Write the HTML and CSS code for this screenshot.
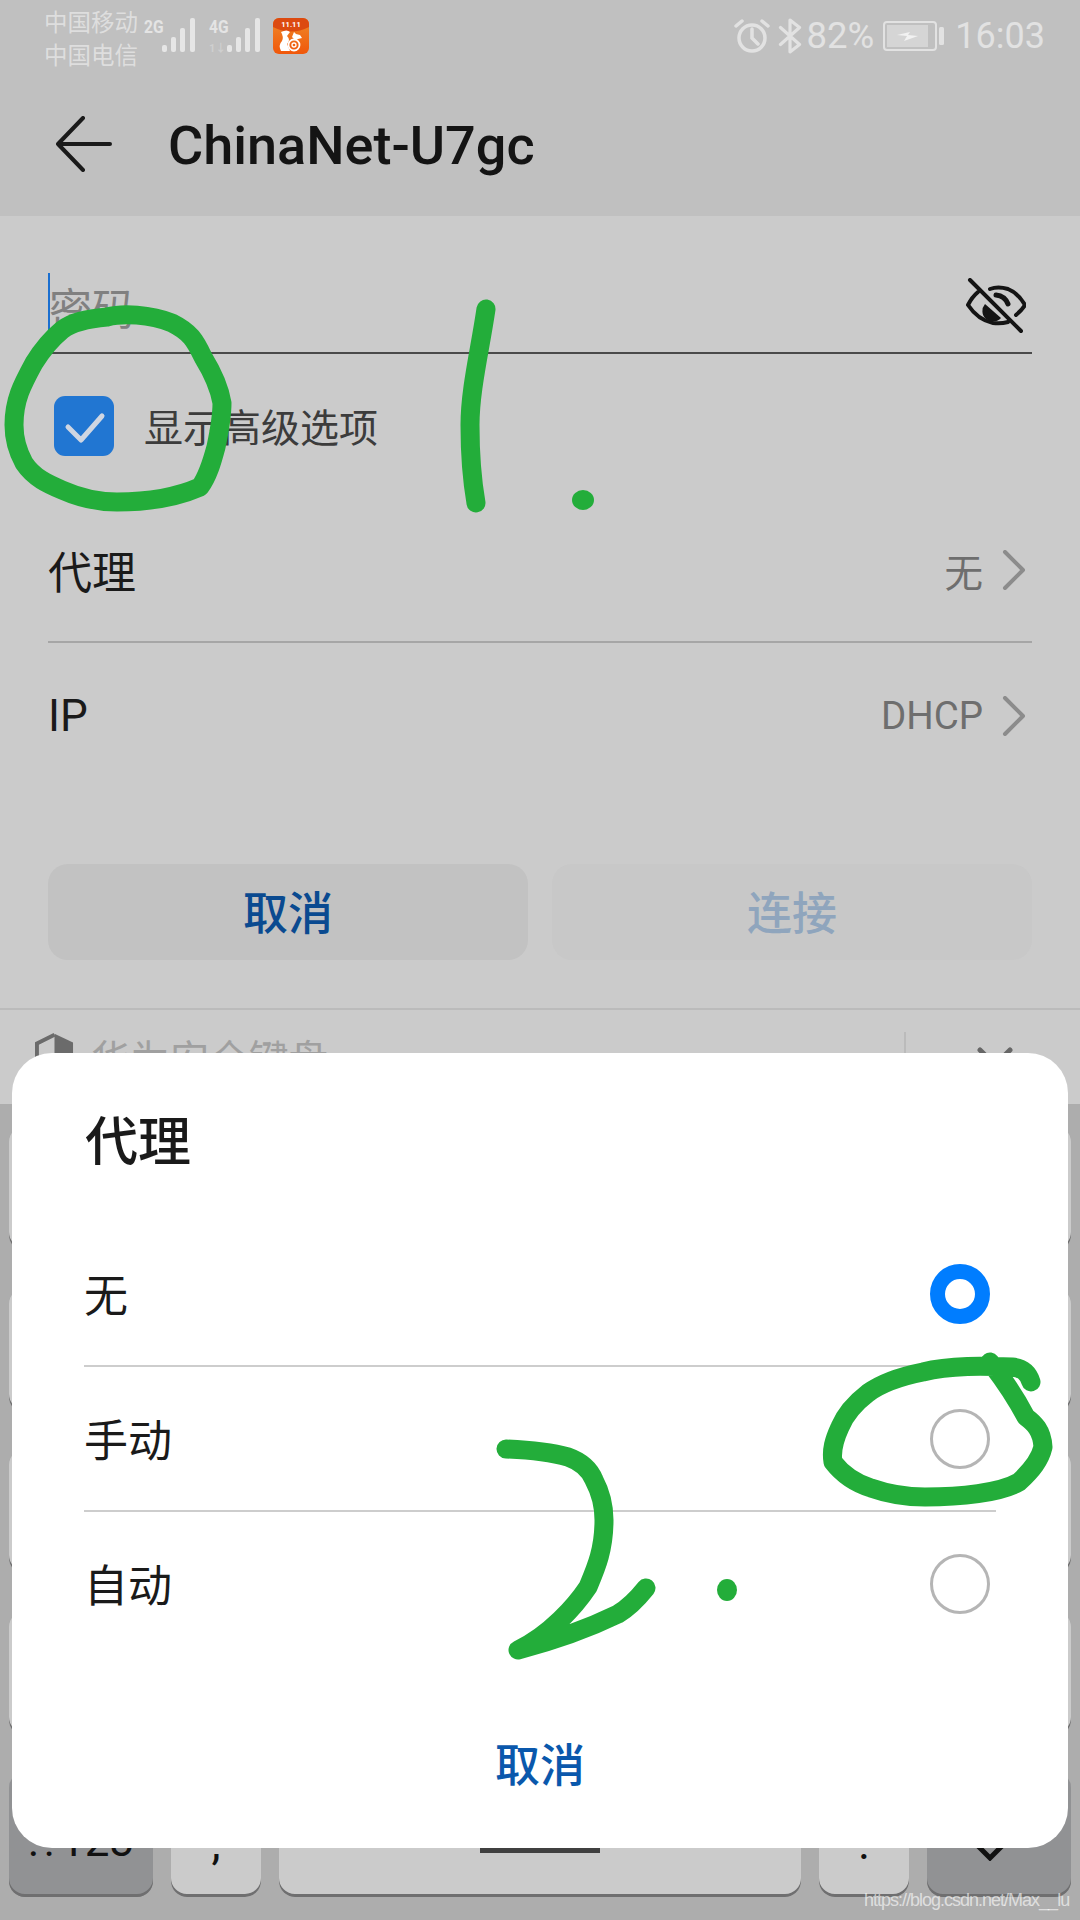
FILE: index.html
```html
<!DOCTYPE html>
<html lang="zh">
<head>
<meta charset="utf-8">
<title>ChinaNet-U7gc</title>
<link rel="stylesheet" href="styles.css">
</head>
<body>
<div class="screen">
  <header class="appbar">
    <div class="status">
      <div class="carriers"><span>中国移动</span><span>中国电信</span></div>
      <div class="net"><div class="net-stack"><span class="net-label">2G</span></div>
        <svg class="bars" viewBox="0 0 36 36"><rect x="0" y="27" width="5" height="7" rx="2"/><rect x="9" y="19" width="5" height="15" rx="2"/><rect x="18" y="10" width="5" height="24" rx="2"/><rect x="28" y="0" width="5" height="34" rx="2"/></svg>
      </div>
      <div class="net net-second"><div class="net-stack"><span class="net-label">4G</span><span class="net-sub">1↓</span></div>
        <svg class="bars" viewBox="0 0 36 36"><rect x="0" y="27" width="5" height="7" rx="2"/><rect x="9" y="19" width="5" height="15" rx="2"/><rect x="18" y="10" width="5" height="24" rx="2"/><rect x="28" y="0" width="5" height="34" rx="2"/></svg>
      </div>
      <svg class="app-icon" viewBox="0 0 36 36">
        <defs><linearGradient id="uc" x1="0" y1="0" x2="0" y2="1"><stop offset="0" stop-color="#ef8a2a"/><stop offset="1" stop-color="#f0570a"/></linearGradient></defs>
        <rect width="36" height="36" rx="6" fill="url(#uc)"/>
        <path d="M0 6a6 6 0 0 1 6-6h24a6 6 0 0 1 6 6v3q-18 9-36 0z" fill="#dc4a10"/>
        <text x="18" y="8.500" text-anchor="middle" class="app-icon-text">11.11</text>
        <path d="M8 14q6-3 9 0l-3 4q4 4 0 8l3 7H8q-3-6 1-10 2-4-1-9z" fill="#fff"/>
        <circle cx="21" cy="27" r="5.500" fill="none" stroke="#fff" stroke-width="1.800"/>
        <circle cx="21" cy="27" r="2" fill="none" stroke="#fff" stroke-width="1.300"/>
        <path d="M19 19l2-5 2 2 4 1 2 3-4 1-2 1-2-1z" fill="#fff"/>
      </svg>
      <div class="status-right">
        <svg class="alarm" viewBox="0 0 36 36" fill="none" stroke="#e2e2e2" stroke-width="3.500"><circle cx="18" cy="20" r="13"/><path d="M18 11v9l6 6M2 8l6-5M34 8l-6-5" stroke-linecap="round"/></svg>
        <svg class="bt" viewBox="0 0 22 34" fill="none" stroke="#e2e2e2" stroke-width="3" stroke-linejoin="round" stroke-linecap="round"><path d="M2 9l18 16-9 7V2l9 7L2 25"/></svg>
        <span class="pct">82%</span>
        <svg class="battery" viewBox="0 0 62 30"><rect x="1" y="1" width="52" height="28" rx="3" fill="none" stroke="#e2e2e2" stroke-width="2"/><rect x="4" y="4" width="41" height="22" fill="#d5d5d5"/><path d="M14 14l13-3-2 3 10 1-14 5 3-5z" fill="#f2f2f2"/><rect x="56" y="6" width="5" height="18" rx="1.500" fill="#e2e2e2"/></svg>
        <span class="clock">16:03</span>
      </div>
    </div>
    <div class="toolbar">
      <svg class="back" viewBox="0 0 56 56" fill="none" stroke="#1a1a1a" stroke-width="4" stroke-linecap="round" stroke-linejoin="round"><path d="M27 2L2 28l25 26M2 28h52"/></svg>
      <h1 class="title">ChinaNet-U7gc</h1>
    </div>
  </header>

  <main class="form">
    <div class="password">
      <span class="caret"></span>
      <span class="placeholder">密码</span>
      <svg class="eye" viewBox="966 278 60 56" fill="none" stroke="#141414" stroke-width="4" stroke-linecap="round">
        <path d="M978 292q-6 5-10 13 10 15 25 18 8 1 15-1"/>
        <path d="M990 289q8-3 18 0 10 4 17 16-3 5-9 10"/>
        <path d="M985 304a10.500 10.500 0 0 0 16 14z" fill="#141414" stroke="none"/>
        <path d="M996 295q9 1 12 9" stroke-width="5"/>
        <path d="M970 280l51 51"/>
      </svg>
    </div>
    <label class="advanced">
      <span class="checkbox"><svg viewBox="0 0 60 60" fill="none" stroke="#cfd6e2" stroke-width="5" stroke-linecap="round" stroke-linejoin="round"><path d="M14 31l13 13 21-24"/></svg></span>
      <span class="advanced-text">显示高级选项</span>
    </label>
    <div class="row row-line">
      <span class="row-label">代理</span>
      <span class="row-value">无</span>
      <svg class="chev" viewBox="0 0 24 40" fill="none" stroke="#8c8c8c" stroke-width="4" stroke-linecap="round" stroke-linejoin="round"><path d="M3 2l18 18L3 38"/></svg>
    </div>
    <div class="row">
      <span class="row-label">IP</span>
      <span class="row-value">DHCP</span>
      <svg class="chev" viewBox="0 0 24 40" fill="none" stroke="#8c8c8c" stroke-width="4" stroke-linecap="round" stroke-linejoin="round"><path d="M3 2l18 18L3 38"/></svg>
    </div>
    <div class="actions">
      <button class="btn btn-cancel">取消</button>
      <button class="btn btn-connect">连接</button>
    </div>
  </main>

  <section class="kb-bar">
    <svg class="shield" viewBox="0 0 40 60"><path d="M20 2L2 11v45" fill="none" stroke="#6b6b6b" stroke-width="4"/><path d="M20 1l19 9v48H20z" fill="#6b6b6b"/></svg>
    <span class="kb-name">华为安全键盘</span>
    <span class="kb-sep"></span>
    <svg class="kb-close" viewBox="0 0 36 24" fill="none" stroke="#666" stroke-width="5" stroke-linecap="round"><path d="M3 3l15 15L33 3"/></svg>
  </section>

  <section class="keyboard">
    <div class="kb-row"><i class="key"></i><i class="key"></i><i class="key"></i><i class="key"></i><i class="key"></i><i class="key"></i><i class="key"></i><i class="key"></i><i class="key"></i><i class="key"></i></div>
    <div class="kb-row"><i class="key"></i><i class="key"></i><i class="key"></i><i class="key"></i><i class="key"></i><i class="key"></i><i class="key"></i><i class="key"></i><i class="key"></i><i class="key"></i></div>
    <div class="kb-row"><i class="key"></i><i class="key"></i><i class="key"></i><i class="key"></i><i class="key"></i><i class="key"></i><i class="key"></i><i class="key"></i><i class="key"></i><i class="key"></i></div>
    <div class="kb-row"><i class="key"></i><i class="key"></i><i class="key"></i><i class="key"></i><i class="key"></i><i class="key"></i><i class="key"></i><i class="key"></i><i class="key"></i><i class="key"></i></div>
    <div class="kb-bottom">
      <div class="key key-fn key-sym">.?123</div>
      <div class="key key-punct">,</div>
      <div class="key key-space"><span class="space-mark"></span></div>
      <div class="key key-punct">.</div>
      <div class="key key-fn"><svg class="enter" viewBox="0 0 30 16" fill="none" stroke="#111" stroke-width="5"><path d="M3 1l12 12L27 1"/></svg></div>
    </div>
  </section>

  <div class="dialog">
    <h2 class="dialog-title">代理</h2>
    <ul class="options">
      <li class="option"><span class="option-text">无</span><span class="radio radio-on"></span></li>
      <li class="option"><span class="option-text">手动</span><span class="radio"></span></li>
      <li class="option"><span class="option-text">自动</span><span class="radio"></span></li>
    </ul>
    <div class="dialog-cancel">取消</div>
  </div>

  <svg class="ink" viewBox="0 0 1080 1920" fill="none" stroke="#23ad3a" stroke-width="19" stroke-linecap="round" stroke-linejoin="round">
    <path d="M203 357C195 340 190 332 172 323C150 314 122 313 107 317C86 319 72 322 62 330C50 340 42 350 34 363C22 385 14 400 14 425C14 440 18 452 24 463C34 478 48 484 62 490C80 498 100 502 117 502C145 502 175 498 200 487C208 476 212 462 216 447C220 428 222 415 222 403C219 385 211 370 203 357"/>
    <path d="M486 309C480 350 470 390 470 425C470 455 472 480 476 503"/>
    <ellipse cx="583" cy="500" rx="11" ry="10" fill="#23ad3a" stroke="none"/>
    <path d="M1031 1382C1028 1372 1022 1368 1012 1367C985 1366 950 1365 923 1372C903 1376 883 1382 868 1393C855 1403 845 1415 840 1427C834 1440 831 1450 833 1462C843 1475 855 1483 871 1488C888 1494 905 1497 925 1497C960 1497 1000 1493 1019 1482C1032 1470 1040 1460 1043 1447C1042 1430 1034 1423 1026 1417C1012 1390 1000 1375 990 1362"/>
    <path d="M506 1449C530 1450 550 1452 568 1457C582 1462 590 1470 594 1480C602 1495 604 1510 604 1520C604 1550 596 1568 588 1587C576 1605 550 1635 518 1650C545 1643 585 1630 618 1614C628 1608 638 1598 646 1588"/>
    <ellipse cx="727" cy="1590" rx="10" ry="11" fill="#23ad3a" stroke="none"/>
  </svg>

  <div class="watermark">https://blog.csdn.net/Max__lu</div>
</div>
</body>
</html>
```

FILE: styles.css
```css
* { box-sizing: border-box; }
html, body { margin: 0; padding: 0; }
body { width: 1080px; height: 1920px; overflow: hidden; font-family: Roboto, "Noto Sans CJK SC", sans-serif; }
.screen { position: relative; width: 1080px; height: 1920px; overflow: hidden; background: #adadad; display: flex; flex-direction: column; }

/* app bar */
.appbar { height: 216px; background: #c0c0c0; }
.status { height: 72px; display: flex; align-items: flex-start; padding-left: 44px; color: #e2e2e2; }
.carriers { display: flex; flex-direction: column; width: 100px; font-size: 23.500px; line-height: 33px; padding-top: 5px; color: #dedede; font-family: "Noto Sans CJK SC", sans-serif; }
.net { display: flex; width: 55px; padding-top: 18px; }
.net-second { width: 63px; margin-left: 10px; }
.net-stack { display: flex; flex-direction: column; width: 18px; }
.net-label { font-size: 19px; line-height: 18px; font-weight: 700; color: #e4e4e4; transform: scaleX(.82); transform-origin: left top; white-space: nowrap; }
.net-sub { font-size: 11px; line-height: 12px; margin-top: 7px; font-weight: 700; color: #cfcfcf; white-space: nowrap; }
.bars { width: 36px; height: 36px; fill: #e6e6e6; }
.app-icon { width: 36px; height: 36px; margin-top: 18px; margin-left: 1px; }
.app-icon-text { font-size: 7.500px; font-weight: 700; fill: #fff; font-family: Roboto, sans-serif; }
.status-right { margin-left: auto; display: flex; align-items: center; height: 72px; padding-right: 35px; }
.alarm { width: 36px; height: 36px; }
.bt { width: 24px; height: 36px; margin-left: 8px; }
.pct { font-size: 36.500px; line-height: 72px; margin-left: 5px; }
.battery { width: 62px; height: 30px; margin-left: 9px; }
.clock { font-size: 36px; line-height: 72px; margin-left: 10px; }

.toolbar { height: 144px; display: flex; align-items: center; padding-left: 56px; }
.back { width: 56px; height: 56px; }
.title { margin: 3px 0 0 56px; font-size: 54px; line-height: 64px; font-weight: 500; color: #141414; }

/* form */
.form { height: 792px; background: #cbcbcb; padding: 57px 48px 0; }
.password { position: relative; height: 81px; border-bottom: 2px solid #4a4a4a; display: flex; justify-content: space-between; }
.caret { position: absolute; left: 0; top: 0; width: 2px; height: 60px; background: #1a6fd0; }
.placeholder { font-size: 43px; line-height: 60px; padding: 3px 0 0 1px; color: #808080; font-family: "Noto Sans CJK SC", sans-serif; }
.eye { width: 60px; height: 56px; margin: 5px 6px 0 0; }
.advanced { display: flex; align-items: center; gap: 30px; padding-left: 6px; margin-top: 42px; height: 60px; }
.checkbox { width: 60px; height: 60px; border-radius: 11px; background: #2176d2; }
.checkbox svg { display: block; width: 60px; height: 60px; }
.advanced-text { font-size: 39px; line-height: 56px; margin-top: -2px; color: #3c3c3c; font-family: "Noto Sans CJK SC", sans-serif; }
.row { height: 145px; display: flex; align-items: center; }
.row-line { margin-top: 42px; border-bottom: 2px solid #a6a6a6; }
.row-label { font-size: 44px; color: #1a1a1a; margin-right: auto; font-family: Roboto, "Noto Sans CJK SC", sans-serif; }
.row-value { font-size: 38.500px; color: #6e6e6e; font-family: Roboto, "Noto Sans CJK SC", sans-serif; }
.chev { width: 24px; height: 40px; margin: 0 6px 0 19px; }
.actions { display: grid; grid-template-columns: 480px 480px; gap: 24px; margin-top: 76px; }
.btn { height: 96px; border: 0; border-radius: 20px; font-size: 45px; font-weight: 500; padding: 0 0 4px; font-family: "Noto Sans CJK SC", sans-serif; }
.btn-cancel { background: #c2c2c2; color: #0a4a90; }
.btn-connect { background: #c8c8c8; color: #8fa5bd; }

/* keyboard */
.kb-bar { height: 96px; background: #cbcbcb; border-top: 2px solid #bbb; display: flex; align-items: flex-start; padding-left: 35px; }
.shield { width: 39px; height: 60px; margin-top: 22px; }
.kb-name { width: 236px; font-size: 39.500px; line-height: 56px; color: #a0a0a0; margin: 19px 0 0 17px; white-space: nowrap; font-family: "Noto Sans CJK SC", sans-serif; }
.kb-sep { width: 2px; height: 60px; background: #bbb; margin: 22px 0 0 577px; }
.kb-close { width: 36px; height: 24px; margin: 37px 0 0 71px; }
.keyboard { flex: 1; padding: 22px 9px 0; display: flex; flex-direction: column; gap: 36.500px; background: #adadad; }
.kb-row { display: grid; grid-template-columns: repeat(10, 1fr); gap: 18px; height: 125px; }
.key { display: flex; align-items: center; justify-content: center; background: #cbcbcb; border-radius: 16px; box-shadow: inset 0 -3px 0 #6f6f70; font-style: normal; color: #111; font-size: 44px; }
.kb-bottom { display: grid; grid-template-columns: 144px 90px 522px 90px 144px; gap: 18px; height: 125px; }
.key-fn { background: #919294; }
.key-sym { padding-top: 12px; }
.key-punct { font-size: 46px; padding-top: 16px; }
.key-space { align-items: flex-start; padding-top: 76px; }
.space-mark { width: 120px; height: 5px; background: #404040; }
.enter { width: 30px; height: 16px; margin: 36px 18px 0 0; }

/* dialog */
.dialog { position: absolute; left: 12px; top: 1053px; width: 1056px; height: 795px; background: #fff; border-radius: 40px; color: #1a1a1a; }
.dialog-title { margin: 0; padding: 45px 0 0 73px; font-size: 53px; line-height: 80px; font-weight: 500; font-family: "Noto Sans CJK SC", sans-serif; }
.options { list-style: none; margin: 44px 0 0; padding: 0 72px; font-size: 44px; font-family: "Noto Sans CJK SC", sans-serif; }
.option { height: 145px; display: flex; align-items: center; justify-content: space-between; padding: 0 6px 0 0; border-bottom: 2px solid #cdcdcd; }
.option:last-child { border-bottom-color: transparent; }
.option-text { line-height: 60px; margin-top: -1px; }
.radio { width: 60px; height: 60px; border-radius: 50%; border: 3px solid #b5b5b5; }
.radio-on { border: 15px solid #007dff; }
.dialog-cancel { margin-top: 73px; text-align: center; font-size: 45px; font-weight: 500; color: #0a58ac; font-family: "Noto Sans CJK SC", sans-serif; }

/* overlays */
.ink { position: absolute; left: 0; top: 0; width: 1080px; height: 1920px; pointer-events: none; }
.watermark { position: absolute; left: 864px; top: 1889px; font-family: "Liberation Sans", sans-serif; font-size: 18px; line-height: 22px; letter-spacing: -1px; color: rgba(255,255,255,.62); white-space: nowrap; }
```
